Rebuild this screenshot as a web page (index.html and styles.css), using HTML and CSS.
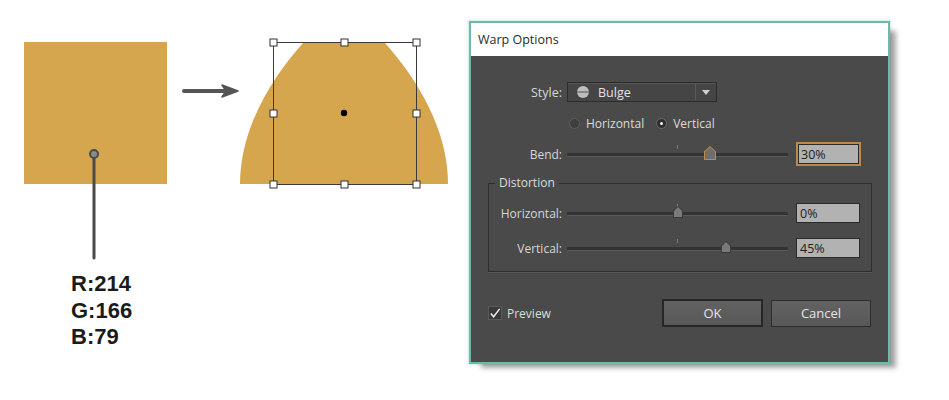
FILE: index.html
```html
<!DOCTYPE html>
<html>
<head>
<meta charset="utf-8">
<link rel="stylesheet" href="styles.css">
</head>
<body>
<div class="page">
  <div class="art">
    <svg class="art-svg" width="469" height="265" viewBox="0 0 469 265">
      <rect x="24" y="42" width="143" height="142" fill="#d6a64f"/>
      <line x1="94" y1="158" x2="94" y2="258" stroke="#4a4a4a" stroke-width="3" stroke-linecap="round"/>
      <circle cx="94" cy="154" r="4" fill="#8a8a8a" stroke="#4a4a4a" stroke-width="2"/>
      <line x1="184" y1="91" x2="226" y2="91" stroke="#555" stroke-width="4" stroke-linecap="round"/>
      <path d="M222,85 L238,91 L222,97 L226,91 Z" fill="#555" stroke="#555" stroke-width="1.5" stroke-linejoin="round"/>
      <path d="M240,184 C240,130 270,80 303,43 L385,43 C418,80 448,130 448,184 Z" fill="#d6a64f"/>
      <rect x="273.5" y="42.5" width="143" height="142" fill="none" stroke="#3a3a3a" stroke-width="1"/>
      <g fill="#fff" stroke="#333" stroke-width="1">
        <rect x="270" y="39" width="7" height="7"/>
        <rect x="341" y="39" width="7" height="7"/>
        <rect x="413" y="39" width="7" height="7"/>
        <rect x="270" y="110" width="7" height="7"/>
        <rect x="413" y="110" width="7" height="7"/>
        <rect x="270" y="181" width="7" height="7"/>
        <rect x="341" y="181" width="7" height="7"/>
        <rect x="413" y="181" width="7" height="7"/>
      </g>
      <circle cx="344" cy="113" r="3.2" fill="#000"/>
    </svg>
    <div class="rgb">
      <div>R:214</div>
      <div>G:166</div>
      <div>B:79</div>
    </div>
  </div>

  <div class="dialog">
    <div class="titlebar">Warp Options</div>
    <div class="body">
      <div class="row row-style">
        <span class="label">Style:</span>
        <div class="dropdown">
          <svg class="dd-icon" width="14" height="14" viewBox="0 0 14 14">
            <circle cx="7" cy="7" r="6" fill="#bdbdbd"/>
            <line x1="1" y1="7" x2="13" y2="7" stroke="#555" stroke-width="1"/>
          </svg>
          <span class="dd-text">Bulge</span>
          <span class="dd-sep"></span>
          <span class="dd-arrow"></span>
        </div>
      </div>
      <div class="row row-radios">
        <span class="radio"></span><span class="radio-label">Horizontal</span>
        <span class="radio checked"></span><span class="radio-label">Vertical</span>
      </div>
      <div class="row row-bend">
        <span class="label">Bend:</span>
        <div class="slider">
          <span class="tick"></span>
          <span class="track"></span>
          <span class="thumb focus" style="left:143px"></span>
        </div>
        <div class="input focus-input">30%</div>
      </div>

      <fieldset class="group">
        <legend>Distortion</legend>
        <div class="row grow">
          <span class="label glabel">Horizontal:</span>
          <div class="slider">
            <span class="tick"></span>
            <span class="track"></span>
            <span class="thumb" style="left:111px"></span>
          </div>
          <div class="input">0%</div>
        </div>
        <div class="row grow grow2">
          <span class="label glabel">Vertical:</span>
          <div class="slider">
            <span class="tick"></span>
            <span class="track"></span>
            <span class="thumb" style="left:159px"></span>
          </div>
          <div class="input">45%</div>
        </div>
      </fieldset>

      <div class="row row-bottom">
        <span class="check">
          <svg width="13" height="13" viewBox="0 0 13 13">
            <path d="M2,6.5 L5,10 L11.5,1.5" fill="none" stroke="#f0f0f0" stroke-width="1.6"/>
          </svg>
        </span>
        <span class="check-label">Preview</span>
        <span class="spacer"></span>
        <div class="btn btn-default">OK</div>
        <div class="btn">Cancel</div>
      </div>
    </div>
  </div>
</div>
</body>
</html>
```

FILE: styles.css
```css
* { box-sizing: border-box; }
html, body { margin: 0; padding: 0; background: #fff; }
body { width: 949px; height: 400px; overflow: hidden; font-family: "Open Sans", "Noto Sans", sans-serif; }

.page { display: flex; align-items: flex-start; }

.art { width: 469px; flex: none; }
.art-svg { display: block; }
.rgb {
  padding-left: 71px;
  margin-top: 6px;
  font-family: "Liberation Sans", Arial, sans-serif;
  font-weight: bold;
  font-size: 22px;
  line-height: 26.5px;
  color: #1b1b1b;
}

.dialog {
  margin-top: 21px;
  width: 421px;
  border: 2px solid #6cbaa8;
  box-shadow: 9px 7px 5px -3px rgba(0,0,0,0.35), 0 0 2px 1px rgba(160,210,200,0.5);
  flex: none;
}
.titlebar {
  height: 33px;
  background: #fff;
  color: #2a2a2a;
  font-size: 12.5px;
  padding-left: 7px;
  display: flex;
  align-items: center;
}
.body {
  background: #4a4a4a;
  height: 306px;
  padding-top: 26px;
  color: #d6d6d6;
  font-size: 12px;
}

.row { display: flex; align-items: center; }
.label { width: 91px; text-align: right; padding-right: 0; flex: none; }
.row-style { height: 20px; }
.row-style .label { margin-right: 5px; font-size: 12.5px; }

.dropdown {
  width: 150px; height: 20px;
  background: #454545;
  border: 1px solid #2c2c2c;
  box-shadow: inset 0 1px 0 #555;
  display: flex; align-items: center;
  padding-left: 8px;
}
.dd-icon { flex: none; }
.dd-text { margin-left: 8px; flex: 1; color: #e2e2e2; font-size: 12.5px; }
.dd-sep { width: 1px; height: 16px; background: #2e2e2e; border-right: 1px solid #5a5a5a; }
.dd-arrow {
  width: 0; height: 0; margin: 0 6px 0 6px;
  border-left: 4px solid transparent; border-right: 4px solid transparent;
  border-top: 5px solid #d0d0d0;
}

.row-radios { height: 18px; margin-top: 12px; padding-left: 98px; }
.radio {
  width: 11px; height: 11px; border-radius: 50%;
  background: #3e3e3e; border: 1px solid #5e5e5e;
  display: inline-flex; align-items: center; justify-content: center;
  flex: none;
}
.radio.checked { background: #2f2f2f; border-color: #6a6a6a; }
.radio.checked::after { content: ""; width: 3px; height: 3px; border-radius: 50%; background: #f2f2f2; }
.radio-label { margin-left: 6px; margin-right: 12px; color: #dcdcdc; }

.row-bend { height: 24px; margin-top: 10px; }
.row-bend .label, .grow .label { margin-right: 5px; }

.slider { position: relative; width: 221px; height: 20px; flex: none; }
.track {
  position: absolute; left: 0; right: 0; top: 9px; height: 4px;
  background: #333; border-bottom: 1px solid #5a5a5a; border-radius: 1px;
}
.tick { position: absolute; left: 110px; top: 1px; width: 1px; height: 4px; background: #7a7a7a; }
.thumb {
  position: absolute; top: 3px; width: 10px; height: 12px;
  margin-left: -5px;
  background: #3a3a3a;
  clip-path: polygon(50% 0, 100% 40%, 100% 100%, 0 100%, 0 40%);
}
.thumb::after {
  content: ""; position: absolute; left: 1px; top: 1px; right: 1px; bottom: 1px;
  background: #7a7a7a;
  clip-path: polygon(50% 0, 100% 40%, 100% 100%, 0 100%, 0 40%);
}
.thumb.focus { background: #c8893c; width: 12px; height: 14px; margin-left: -6px; top: 2px; }
.thumb.focus::after { background: #6e6e6e; }

.input {
  margin-left: 8px;
  width: 64px; height: 20px; flex: none;
  background: #b2b2b2; border: 1px solid #2a2a2a;
  color: #222; font-size: 12.5px;
  display: flex; align-items: center; padding-left: 3px;
}
.focus-input { height: 24px; width: 65px; border: 2px solid #b98a4c; box-shadow: inset 0 0 0 1px #2a2a2a; }

.group {
  margin: 10px 0 0 17px;
  width: 384px; height: 96px;
  border: 1px solid #2f2f2f;
  box-shadow: 0 1px 0 #585858;
  padding: 0;
  position: relative;
}
.group legend {
  margin-left: 6px; padding: 0 4px;
  font-size: 12px; color: #dcdcdc; line-height: 14px;
}
.glabel { width: 73px; }
.grow { height: 20px; margin-top: 13px; }
.grow2 { margin-top: 15px; }

.row-bottom { height: 28px; margin-top: 27px; padding-left: 17px; padding-right: 17px; }
.check {
  width: 14px; height: 14px; flex: none;
  background: #3a3a3a; border: 1px solid #5a5a5a;
  display: flex; align-items: center; justify-content: center;
}
.check svg { display: block; }
.check-label { margin-left: 5px; color: #dcdcdc; }
.spacer { flex: 1; }
.btn {
  width: 100px; height: 27px;
  background: linear-gradient(#626262, #585858);
  border: 1px solid #2d2d2d;
  color: #e4e4e4; font-size: 13px;
  display: flex; align-items: center; justify-content: center;
  margin-left: 8px;
}
.btn-default { width: 101px; height: 28px; border: 2px solid #262626; margin-left: 0; }
```
